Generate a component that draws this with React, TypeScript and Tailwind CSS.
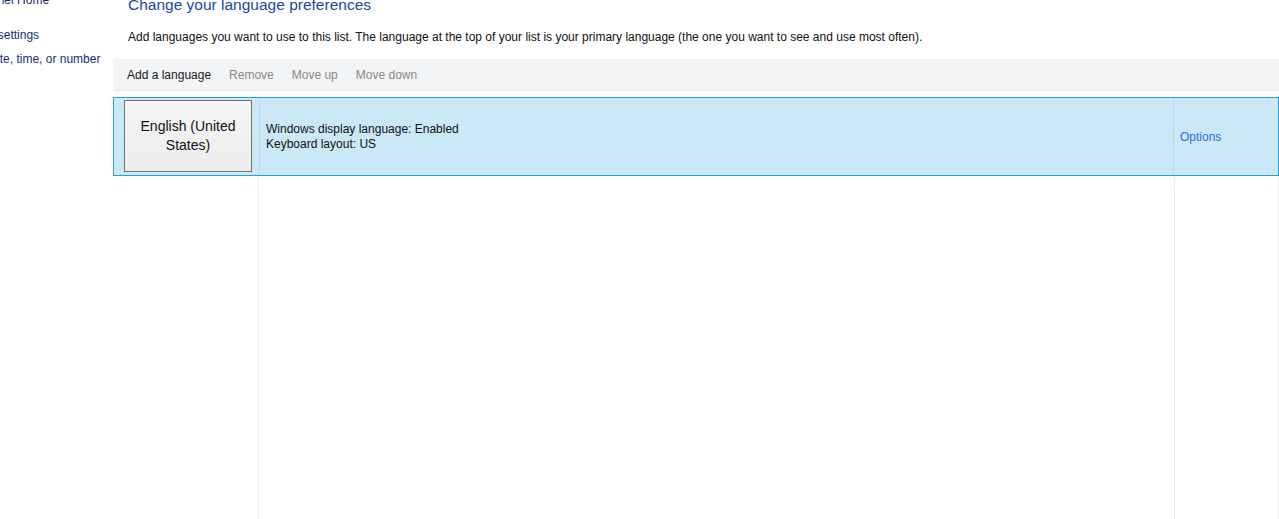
import React from "react";

const font = { fontFamily: '"Liberation Sans", Arial, sans-serif' };

function Sidebar() {
  // the side panel is scrolled out of view to the left, only its tail shows
  return (
    <div className="w-[113px] shrink-0 overflow-hidden">
      <div className="ml-[-59px] w-[170px] text-[12px] leading-[16px] text-[#202c78]">
        <div className="mt-[-8px]">Control Panel Home</div>
        <div className="mt-[19px]">Advanced settings</div>
        <div className="mt-[8px]">Change date, time, or number formats</div>
      </div>
    </div>
  );
}

function Toolbar() {
  return (
    <div className="mt-[14px] h-[32px] flex items-center gap-[18px] pl-[14px] bg-[#f3f4f6] border-b border-[#e6e7e9] text-[12px]">
      <span className="text-[#1a1a1a]">Add a language</span>
      <span className="text-[#8a8a8a]">Remove</span>
      <span className="text-[#8a8a8a]">Move up</span>
      <span className="text-[#8a8a8a]">Move down</span>
    </div>
  );
}

function LanguageRow() {
  return (
    <div className="flex h-[79px] border border-[#26a0da] bg-[#cbe8f6]">
      <div className="w-[146px] shrink-0 border-r border-[#b7dcef] pl-[10px] pt-[2px]">
        <div className="w-[128px] h-[72px] flex items-center justify-center text-center border border-[#707070] bg-gradient-to-b from-[#f6f6f6] to-[#ececec] text-[14px] leading-[19px] text-[#111]">
          English (United
          <br />
          States)
        </div>
      </div>
      <div className="flex-1 flex flex-col justify-center pl-[6px] text-[12px] leading-[15px] text-[#111]">
        <div>Windows display language: Enabled</div>
        <div>Keyboard layout: US</div>
      </div>
      <div className="w-[105px] shrink-0 border-l border-[#b7dcef] flex items-center pl-[6px] text-[12px] text-[#2f6fd3]">
        Options
      </div>
    </div>
  );
}

export default function App() {
  return (
    <div className="w-full h-[519px] overflow-hidden bg-white flex" style={font}>
      <Sidebar />
      <div className="flex-1 flex flex-col">
        <h1 className="mt-[-5px] pl-[15px] text-[15.5px] leading-[20px] font-normal text-[#1e46a6]">
          Change your language preferences
        </h1>
        <p className="mt-[14px] pl-[15px] text-[12px] leading-[16px] text-[#111]">
          Add languages you want to use to this list. The language at the top of your list is your primary language (the one you want to see and use most often).
        </p>
        <Toolbar />
        <div className="mt-[6px] flex-1 flex flex-col">
          <LanguageRow />
          <div className="flex-1 flex">
            <div className="w-[146px] shrink-0 border-r border-[#e4edf8]" />
            <div className="flex-1 border-r border-[#e4edf8]" />
            <div className="w-[104px] shrink-0 border-r border-[#e4edf8]" />
          </div>
        </div>
      </div>
    </div>
  );
}
